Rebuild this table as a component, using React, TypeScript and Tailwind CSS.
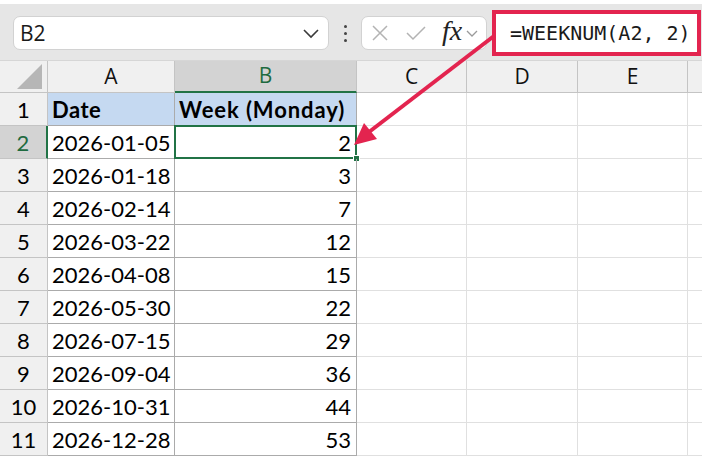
import React from 'react'

const cols = [
  { key: 'A', w: 'w-[127px]' },
  { key: 'B', w: 'w-[182px]' },
  { key: 'C', w: 'w-[110px]' },
  { key: 'D', w: 'w-[111px]' },
  { key: 'E', w: 'w-[110px]' },
]

const data: [string, number][] = [
  ['2026-01-05', 2],
  ['2026-01-18', 3],
  ['2026-02-14', 7],
  ['2026-03-22', 12],
  ['2026-04-08', 15],
  ['2026-05-30', 22],
  ['2026-07-15', 29],
  ['2026-09-04', 36],
  ['2026-10-31', 44],
  ['2026-12-28', 53],
]

const cellFont = "font-['Lato',sans-serif] text-[22px] text-black"

function Toolbar() {
  return (
    <div className="flex items-start h-[56px] bg-[#e6e6e6] pl-[13px] pt-[12px]">
      <div className="flex items-center justify-between w-[316px] h-[34px] bg-white rounded-[7px] border border-[#d2d2d2] pl-[6px] pr-[8px]">
        <span className="font-['Open_Sans',sans-serif] text-[21px] text-[#1a1a1a] leading-none">B2</span>
        <svg width="18" height="12" viewBox="0 0 18 12">
          <path d="M2 3 L9 10 L16 3" fill="none" stroke="#3a3a3a" strokeWidth="1.6" />
        </svg>
      </div>
      <div className="flex flex-col items-center justify-center gap-[4px] w-[32px] h-[34px]">
        <span className="w-[3px] h-[3px] bg-[#444] rounded-full" />
        <span className="w-[3px] h-[3px] bg-[#444] rounded-full" />
        <span className="w-[3px] h-[3px] bg-[#444] rounded-full" />
      </div>
      <div className="flex items-center w-[126px] h-[34px] bg-white rounded-[7px] border border-[#d2d2d2] pl-[9px]">
        <svg width="18" height="18" viewBox="0 0 18 18">
          <path d="M2 2 L16 16 M16 2 L2 16" stroke="#b3b3b3" strokeWidth="1.5" />
        </svg>
        <svg width="22" height="18" viewBox="0 0 22 18" className="ml-[16px]">
          <path d="M2 9 L8 15 L20 3" fill="none" stroke="#b3b3b3" strokeWidth="1.5" />
        </svg>
        <span className="ml-[15px] font-['Liberation_Serif',serif] italic text-[28px] leading-none text-[#222] -mt-[4px]">fx</span>
        <svg width="14" height="10" viewBox="0 0 14 10" className="ml-[3px]">
          <path d="M2 3 L7 8 L12 3" fill="none" stroke="#9a9a9a" strokeWidth="1.3" />
        </svg>
      </div>
      <div className="flex items-center w-[209px] h-[46px] -mt-[6px] ml-[5px] bg-white border-[4px] border-[#e3244f] pl-[14px]">
        <span className="font-['DejaVu_Sans_Mono',monospace] text-[20px] text-[#1a1a1a] leading-none">=WEEKNUM(A2, 2)</span>
      </div>
    </div>
  )
}

function ColumnHeaders() {
  return (
    <div className="flex h-[33px] bg-[#f0f0f0] border-t border-[#d6d6d6]">
      <div className="relative w-[48px] border-r border-b border-[#c4c4c4]">
        <svg width="26" height="26" viewBox="0 0 26 26" className="absolute right-[4px] bottom-[2px]">
          <path d="M25 0 L25 25 L0 25 Z" fill="#b6b6b6" />
        </svg>
      </div>
      {cols.map((c) =>
        c.key === 'B' ? (
          <div
            key={c.key}
            className={`${c.w} flex items-center justify-center bg-[#d3d3d3] border-r border-[#c4c4c4] border-b-2 border-b-[#217346] font-['Open_Sans',sans-serif] text-[21px] text-[#1e6b3f]`}
          >
            {c.key}
          </div>
        ) : (
          <div
            key={c.key}
            className={`${c.w} flex items-center justify-center border-r border-b border-[#c4c4c4] font-['Open_Sans',sans-serif] text-[21px] text-[#111]`}
          >
            {c.key}
          </div>
        )
      )}
      <div className="flex-1 border-b border-[#c4c4c4]" />
    </div>
  )
}

function DataRow({ n, a, b, bold }: { n: number; a: string; b: string; bold?: boolean }) {
  const selected = n === 2
  return (
    <div className="flex h-[33px]">
      <div
        className={
          selected
            ? "w-[48px] flex items-center justify-center bg-[#d3d3d3] border-r-2 border-r-[#217346] border-b border-[#c4c4c4] font-['Lato',sans-serif] text-[22px] text-[#1e6b3f]"
            : "w-[48px] flex items-center justify-center bg-[#f0f0f0] border-r border-b border-[#c4c4c4] font-['Lato',sans-serif] text-[22px] text-black"
        }
      >
        {n}
      </div>
      <div
        className={`w-[127px] flex items-center pl-[4px] border-r border-b border-[#ababab] ${bold ? 'bg-[#c5d9f1] font-bold tracking-[0.5px]' : ''} ${cellFont}`}
      >
        {a}
      </div>
      <div
        className={`relative w-[182px] flex items-center border-r border-b border-[#ababab] ${bold ? 'bg-[#c5d9f1] font-bold tracking-[0.9px] justify-start pl-[4px]' : 'justify-end pr-[5px]'} ${cellFont}`}
      >
        {b}
        {selected && (
          <>
            <div className="absolute -left-[1px] -top-[1px] -right-[1px] -bottom-[1px] border-2 border-[#217346]" />
            <div className="absolute -right-[4px] -bottom-[4px] w-[7px] h-[7px] bg-[#217346] border border-white" />
          </>
        )}
      </div>
      {cols.slice(2).map((c) => (
        <div key={c.key} className={`${c.w} border-r border-b border-[#e0e0e0]`} />
      ))}
      <div className="flex-1 border-b border-[#e0e0e0]" />
    </div>
  )
}

export default function App() {
  return (
    <div className="relative w-[702px] h-[459px] bg-white overflow-hidden">
      <div className="h-[4px] bg-white" />
      <Toolbar />
      <ColumnHeaders />
      <DataRow n={1} a="Date" b="Week (Monday)" bold />
      {data.map(([d, w], i) => (
        <DataRow key={d} n={i + 2} a={d} b={String(w)} />
      ))}
      <svg className="absolute inset-0 pointer-events-none" width="702" height="459" viewBox="0 0 702 459">
        <line x1="494" y1="36" x2="369" y2="132" stroke="#e3244f" strokeWidth="4" />
        <polygon points="354,145 364,123 377,139" fill="#e3244f" />
      </svg>
    </div>
  )
}
